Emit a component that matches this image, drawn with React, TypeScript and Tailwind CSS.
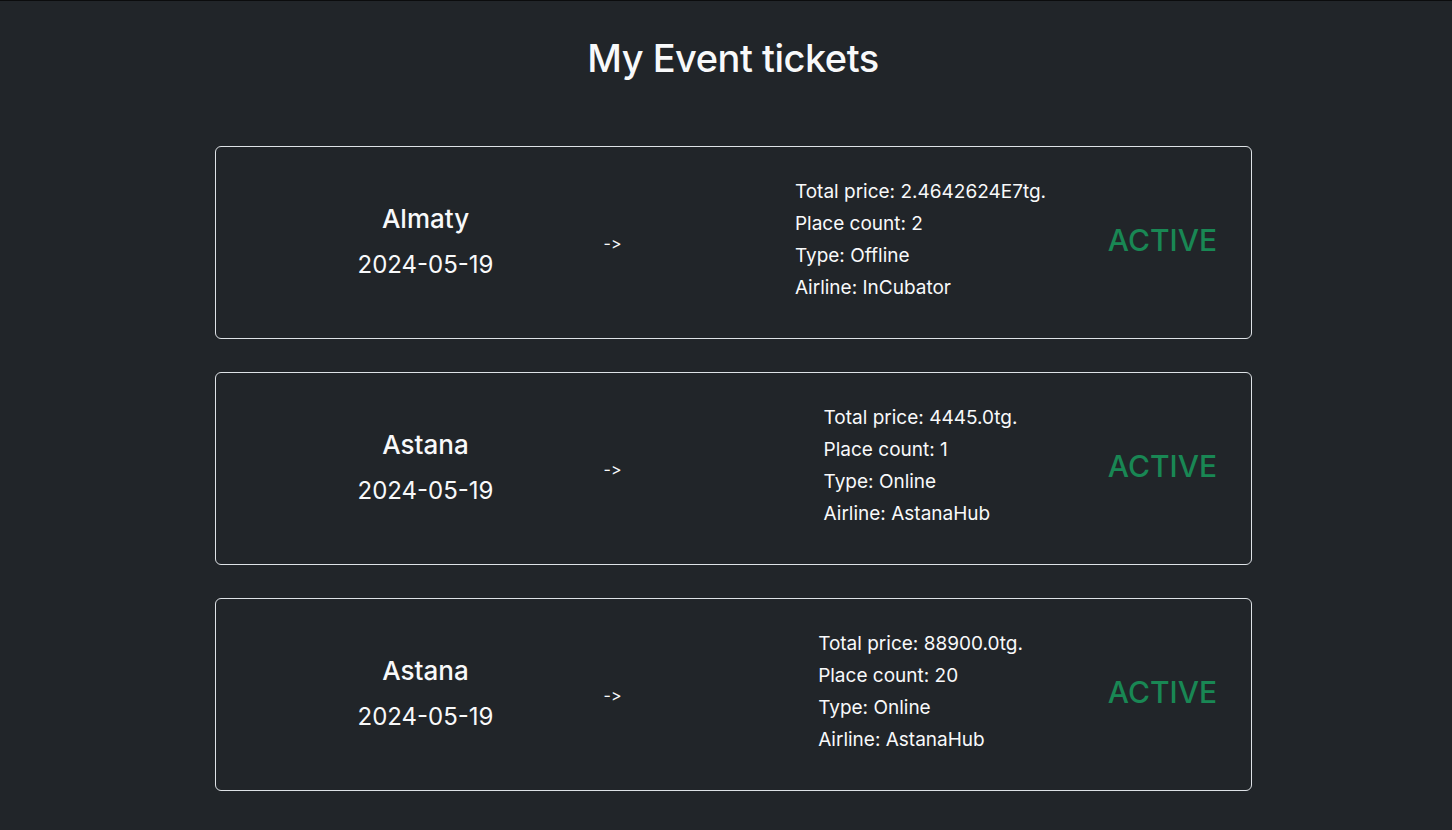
import React from "react";

type Ticket = {
  city: string;
  date: string;
  price: string;
  count: number;
  type: string;
  airline: string;
};

const tickets: Ticket[] = [
  { city: "Almaty", date: "2024-05-19", price: "2.4642624E7", count: 2, type: "Offline", airline: "InCubator" },
  { city: "Astana", date: "2024-05-19", price: "4445.0", count: 1, type: "Online", airline: "AstanaHub" },
  { city: "Astana", date: "2024-05-19", price: "88900.0", count: 20, type: "Online", airline: "AstanaHub" },
];

function TicketCard({ t }: { t: Ticket }) {
  return (
    <div className="flex h-[193px] items-center rounded-[6px] border border-[#dee2e6] pl-[110px]">
      <div className="flex w-[200px] flex-col items-center pb-[3px]">
        <div className="text-[26px] font-medium leading-[32px]">{t.city}</div>
        <div className="mt-[15px] text-[24px] leading-[29px]">{t.date}</div>
      </div>
      <div className="ml-[37px] flex w-[100px] justify-center pt-[1px] text-[16px] [font-feature-settings:'calt'_0]">-&gt;</div>
      <div className="ml-[98px] flex w-[320px] justify-center pb-[6px]">
        <div className="text-[19px] leading-[32px]">
          <div>Total price: {t.price}tg.</div>
          <div>Place count: {t.count}</div>
          <div>Type: {t.type}</div>
          <div>Airline: {t.airline}</div>
        </div>
      </div>
      <div className="ml-[22px] flex w-[120px] justify-center pb-[6px] text-[30px] font-medium leading-[36px] text-[#198754]">
        ACTIVE
      </div>
    </div>
  );
}

export default function App() {
  return (
    <div
      className="min-h-[830px] border-t border-[#0b0c0d] bg-[#212529] pl-[14px] text-[#f8f9fa]"
      style={{ fontFamily: "Inter, 'Noto Sans', sans-serif" }}
    >
      <h1 className="pt-[34px] text-center text-[38px] font-medium leading-[46px] tracking-[-0.5px]">My Event tickets</h1>
      <div className="mx-auto mt-[65px] flex w-[1037px] flex-col gap-[33px]">
        {tickets.map((t, i) => (
          <TicketCard key={i} t={t} />
        ))}
      </div>
    </div>
  );
}
